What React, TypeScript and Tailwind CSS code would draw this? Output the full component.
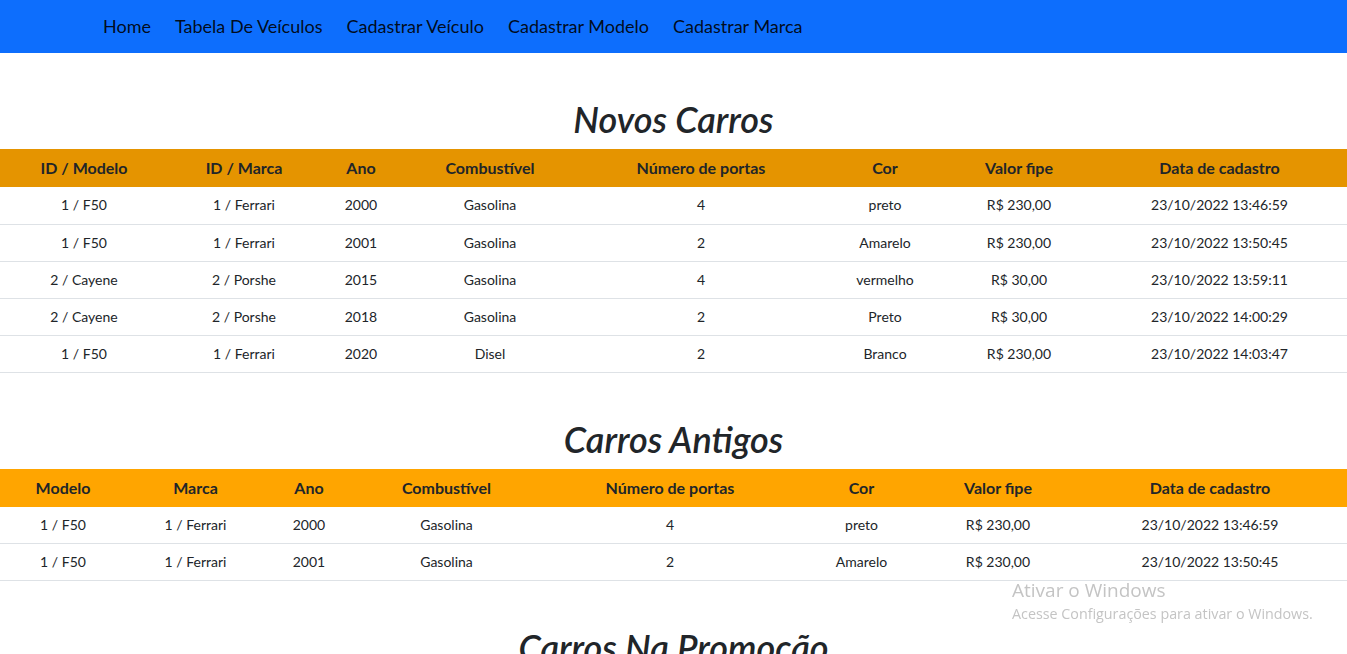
import React from 'react'

type Linha = string[]

const novos: Linha[] = [
  ['1 / F50', '1 / Ferrari', '2000', 'Gasolina', '4', 'preto', 'R$ 230,00', '23/10/2022 13:46:59'],
  ['1 / F50', '1 / Ferrari', '2001', 'Gasolina', '2', 'Amarelo', 'R$ 230,00', '23/10/2022 13:50:45'],
  ['2 / Cayene', '2 / Porshe', '2015', 'Gasolina', '4', 'vermelho', 'R$ 30,00', '23/10/2022 13:59:11'],
  ['2 / Cayene', '2 / Porshe', '2018', 'Gasolina', '2', 'Preto', 'R$ 30,00', '23/10/2022 14:00:29'],
  ['1 / F50', '1 / Ferrari', '2020', 'Disel', '2', 'Branco', 'R$ 230,00', '23/10/2022 14:03:47']
]

const antigos: Linha[] = [
  ['1 / F50', '1 / Ferrari', '2000', 'Gasolina', '4', 'preto', 'R$ 230,00', '23/10/2022 13:46:59'],
  ['1 / F50', '1 / Ferrari', '2001', 'Gasolina', '2', 'Amarelo', 'R$ 230,00', '23/10/2022 13:50:45']
]

const promocao: Linha[] = [
  ['2 / Cayene', '2 / Porshe', '2015', 'Gasolina', '4', 'vermelho', 'R$ 30,00', '23/10/2022 13:59:11']
]

function Tabela({
  titulo,
  colunas,
  larguras,
  linhas,
  corHeader
}: {
  titulo: string
  colunas: string[]
  larguras: number[]
  linhas: Linha[]
  corHeader: string
}) {
  return (
    <section className="pt-[45px]">
      <h1 className="text-center text-[36px] leading-[43px] italic font-semibold text-[#212529] mb-2">
        {titulo}
      </h1>

      <table className="w-full table-fixed border-collapse text-[#212529]">
        <colgroup>
          {larguras.map((w, i) => (
            <col key={i} style={{ width: w }} />
          ))}
        </colgroup>
        <thead>
          <tr className={corHeader}>
            {colunas.map((c) => (
              <th key={c} className="h-[38px] py-0 text-base leading-[22px] font-bold text-center">
                {c}
              </th>
            ))}
          </tr>
        </thead>
        <tbody>
          {linhas.map((l, i) => (
            <tr key={i} className="border-b border-[#dee2e6]">
              {l.map((v, j) => (
                <td key={j} className="h-[37px] py-0 text-sm leading-5 text-center">
                  {v}
                </td>
              ))}
            </tr>
          ))}
        </tbody>
      </table>
    </section>
  )
}

export default function App() {
  const links = ['Home', 'Tabela De Veículos', 'Cadastrar Veículo', 'Cadastrar Modelo', 'Cadastrar Marca']

  return (
    <div className="min-h-screen bg-white font-['Lato',sans-serif]">
      <nav className="h-[53px] bg-[#0d6efd] flex items-center pl-[103px] gap-6 pb-px">
        {links.map((l) => (
          <a key={l} href="#" className="text-lg text-black/90">
            {l}
          </a>
        ))}
      </nav>

      <Tabela
        titulo="Novos Carros"
        colunas={['ID / Modelo', 'ID / Marca', 'Ano', 'Combustível', 'Número de portas', 'Cor', 'Valor fipe', 'Data de cadastro']}
        larguras={[168, 152, 82, 176, 246, 122, 146, 255]}
        linhas={novos}
        corHeader="bg-[#e59400]"
      />

      <Tabela
        titulo="Carros Antigos"
        colunas={['Modelo', 'Marca', 'Ano', 'Combustível', 'Número de portas', 'Cor', 'Valor fipe', 'Data de cadastro']}
        larguras={[126, 139, 88, 187, 260, 123, 150, 274]}
        linhas={antigos}
        corHeader="bg-[#ffa500]"
      />

      <Tabela
        titulo="Carros Na Promoção"
        colunas={['Modelo', 'Marca', 'Ano', 'Combustível', 'Número de portas', 'Cor', 'Valor fipe', 'Data de cadastro']}
        larguras={[126, 139, 88, 187, 260, 123, 150, 274]}
        linhas={promocao}
        corHeader="bg-[#ffa500]"
      />

      <div className="fixed left-[1012px] top-[578px] font-['Open_Sans',sans-serif] text-[#c4c4c4] pointer-events-none">
        <p className="text-[19px] leading-6">Ativar o Windows</p>
        <p className="text-[14.3px] leading-5 mt-[2px]">Acesse Configurações para ativar o Windows.</p>
      </div>
    </div>
  )
}
